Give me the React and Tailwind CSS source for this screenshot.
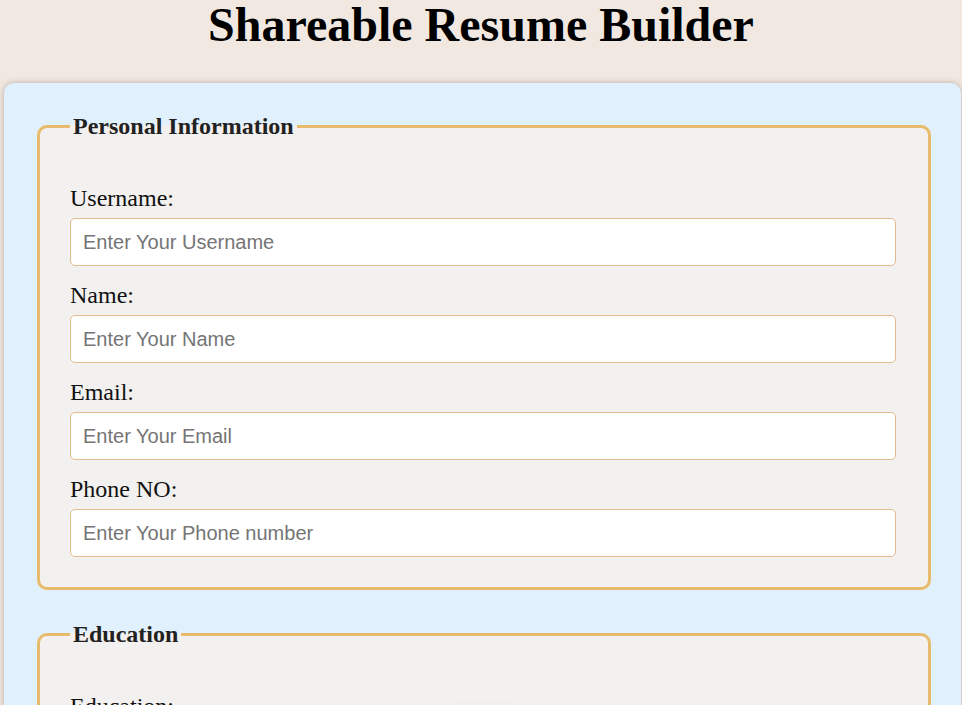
import React from "react";

const serif = { fontFamily: '"Liberation Serif", "Times New Roman", serif' };

function Field({ label, placeholder }) {
  return (
    <div className="flex flex-col">
      <label className="text-[24px] leading-[27px] text-[#111]" style={serif}>
        {label}
      </label>
      <input
        type="text"
        placeholder={placeholder}
        className="mt-[6px] h-[48px] w-full rounded-[5px] border border-[#e3bb8c] bg-white px-[12px] text-[20px] text-black placeholder:text-[#757575] outline-none"
        style={{ fontFamily: '"Liberation Sans", Arial, sans-serif' }}
      />
    </div>
  );
}

function Section({ title, children }) {
  return (
    <fieldset className="m-0 w-[894px] rounded-[10px] border-[3px] border-solid border-[#e6bb6c] bg-[#f3f1ef] pb-[30px] pl-[30px] pr-[32px] pt-[45px]">
      <legend
        className="px-[3px] text-[24px] font-bold leading-[27px] text-[#222]"
        style={serif}
      >
        {title}
      </legend>
      {children}
    </fieldset>
  );
}

export default function App() {
  return (
    <div className="min-h-[705px] overflow-hidden bg-[#f1e8e2]" style={serif}>
      <h1 className="m-0 pt-[1px] text-center text-[48px] font-bold leading-[48px] text-black" style={serif}>
        Shareable Resume Builder
      </h1>
      <div className="ml-[4px] mt-[34px] w-[957px] rounded-[10px] bg-[#e1f0fd] px-[33px] pt-[30px] pb-[40px] shadow-[0_0_6px_rgba(80,60,50,0.35)]">
        <div className="flex flex-col gap-[31px]">
          <Section title="Personal Information">
            <div className="flex flex-col gap-[16px]">
              <Field label="Username:" placeholder="Enter Your Username" />
              <Field label="Name:" placeholder="Enter Your Name" />
              <Field label="Email:" placeholder="Enter Your Email" />
              <Field label="Phone NO:" placeholder="Enter Your Phone number" />
            </div>
          </Section>
          <Section title="Education">
            <div className="flex flex-col">
              <label className="text-[24px] leading-[27px] text-[#111]" style={serif}>
                Education:
              </label>
              <div className="mx-auto mt-[4px] h-[40px] w-[100px] rounded-[20px] bg-[#f3f1ef] shadow-[0_0_28px_rgba(0,0,0,0.14)]" />
              <div className="mt-[20px] h-[48px]" />
            </div>
          </Section>
        </div>
      </div>
    </div>
  );
}
